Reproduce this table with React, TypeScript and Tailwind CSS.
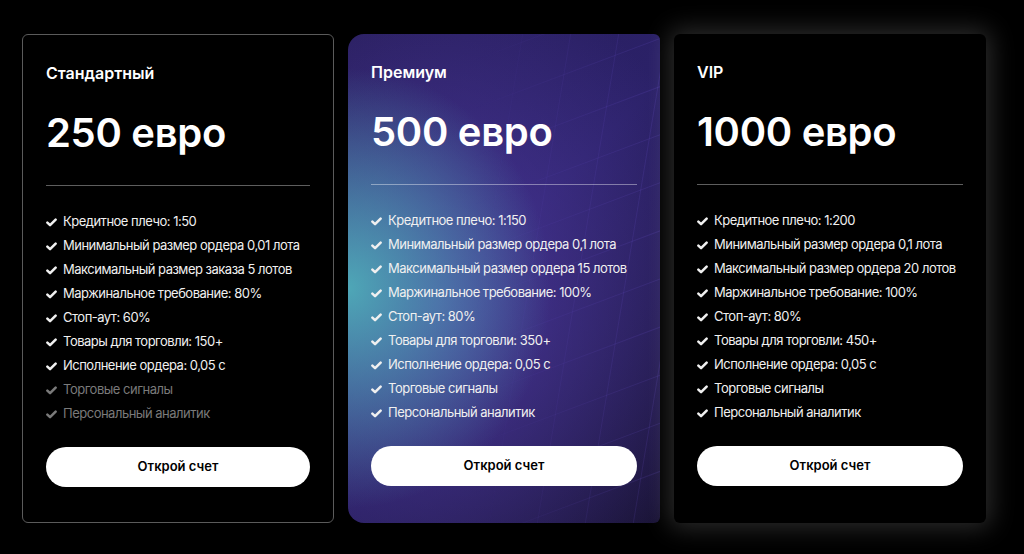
type Plan = {
  name: string;
  price: string;
  items: string[];
  muted?: number[];
  variant: "outline" | "premium" | "glow";
};

const plans: Plan[] = [
  {
    name: "Стандартный",
    price: "250 евро",
    variant: "outline",
    items: [
      "Кредитное плечо: 1:50",
      "Минимальный размер ордера 0,01 лота",
      "Максимальный размер заказа 5 лотов",
      "Маржинальное требование: 80%",
      "Стоп-аут: 60%",
      "Товары для торговли: 150+",
      "Исполнение ордера: 0,05 с",
      "Торговые сигналы",
      "Персональный аналитик",
    ],
    muted: [7, 8],
  },
  {
    name: "Премиум",
    price: "500 евро",
    variant: "premium",
    items: [
      "Кредитное плечо: 1:150",
      "Минимальный размер ордера 0,1 лота",
      "Максимальный размер ордера 15 лотов",
      "Маржинальное требование: 100%",
      "Стоп-аут: 80%",
      "Товары для торговли: 350+",
      "Исполнение ордера: 0,05 с",
      "Торговые сигналы",
      "Персональный аналитик",
    ],
  },
  {
    name: "VIP",
    price: "1000 евро",
    variant: "glow",
    items: [
      "Кредитное плечо: 1:200",
      "Минимальный размер ордера 0,1 лота",
      "Максимальный размер ордера 20 лотов",
      "Маржинальное требование: 100%",
      "Стоп-аут: 80%",
      "Товары для торговли: 450+",
      "Исполнение ордера: 0,05 с",
      "Торговые сигналы",
      "Персональный аналитик",
    ],
  },
];

const Check = () => (
  <svg viewBox="0 0 12 10" className="h-[9px] w-[11px] shrink-0" fill="none">
    <path
      d="M1.4 5.1 4.4 8 10.6 1.7"
      stroke="currentColor"
      strokeWidth="2.8"
      strokeLinecap="round"
      strokeLinejoin="round"
    />
  </svg>
);

const GridLines = () => (
  <svg
    className="pointer-events-none absolute inset-0 h-full w-full"
    viewBox="0 0 312 488"
    preserveAspectRatio="none"
  >
    <defs>
      <linearGradient id="fade" x1="0" y1="0" x2="1" y2="0">
        <stop offset="0.4" stopColor="#fff" stopOpacity="0" />
        <stop offset="1" stopColor="#fff" stopOpacity="1" />
      </linearGradient>
      <mask id="gm">
        <rect width="312" height="488" fill="url(#fade)" />
      </mask>
    </defs>
    <g mask="url(#gm)" stroke="#8d6cff" strokeOpacity="0.13" strokeWidth="1">
      {[0, 1, 2, 3, 4, 5, 6, 7, 8, 9].map((i) => (
        <line key={"a" + i} x1={130 + i * 48} y1={-20} x2={40 + i * 48} y2={520} />
      ))}
      {[0, 1, 2, 3, 4, 5, 6, 7, 8, 9, 10, 11, 12].map((i) => (
        <line key={"b" + i} x1={100} y1={-60 + i * 48} x2={340} y2={-150 + i * 48} />
      ))}
    </g>
  </svg>
);

const Card = ({ plan }: { plan: Plan }) => {
  const shell =
    plan.variant === "outline"
      ? "rounded-[6px] border border-[#5b5b5b] bg-black"
      : plan.variant === "premium"
        ? "rounded-l-[16px] rounded-r-[6px] bg-[#2a2062] bg-[radial-gradient(ellipse_65%_45%_at_0%_52%,rgba(80,180,188,0.9),rgba(80,180,188,0)_100%),radial-gradient(ellipse_90%_70%_at_30%_55%,rgba(78,58,160,0.85),rgba(78,58,160,0)_100%),linear-gradient(135deg,#281e5c_0%,#2b2168_45%,#1a1436_100%)]"
        : "rounded-[6px] bg-black shadow-[0_0_24px_5px_rgba(255,255,255,0.17)]";
  const divider = plan.variant === "premium" ? "bg-white/40" : "bg-[#5e5e5e]";

  return (
    <div
      className={`relative flex h-[489px] w-[312px] flex-col overflow-hidden px-[23px] pt-[26px] ${shell}`}
    >
      {plan.variant === "premium" && <GridLines />}
      <div className="relative flex flex-1 flex-col">
        <div className="text-[16px] font-semibold leading-6 text-white">{plan.name}</div>
        <div className="mt-6 text-[40px] font-semibold leading-[48px] tracking-[-0.3px] text-white">
          {plan.price}
        </div>
        <div className={`mt-[28px] h-px w-full ${divider}`} />
        <ul className="mt-6 flex flex-col">
          {plan.items.map((t, i) => {
            const muted = plan.muted?.includes(i);
            return (
              <li
                key={t}
                className={`flex h-6 items-center gap-[6px] whitespace-nowrap text-[13px] tracking-[-0.5px] ${
                  muted ? "text-[#7a7a7a]" : "text-[#f0f0f0]"
                }`}
              >
                <Check />
                <span>{t}</span>
              </li>
            );
          })}
        </ul>
        <button className="mt-[21px] flex h-10 w-full items-center justify-center rounded-full bg-white text-[13px] font-semibold text-black">
          Открой счет
        </button>
      </div>
    </div>
  );
};

export default function App() {
  return (
    <div
      className="flex h-[554px] w-[1024px] gap-[14px] bg-black pl-[22px] pt-[34px]"
      style={{ fontFamily: "Inter, 'Noto Sans', sans-serif" }}
    >
      {plans.map((p) => (
        <Card key={p.name} plan={p} />
      ))}
    </div>
  );
}
